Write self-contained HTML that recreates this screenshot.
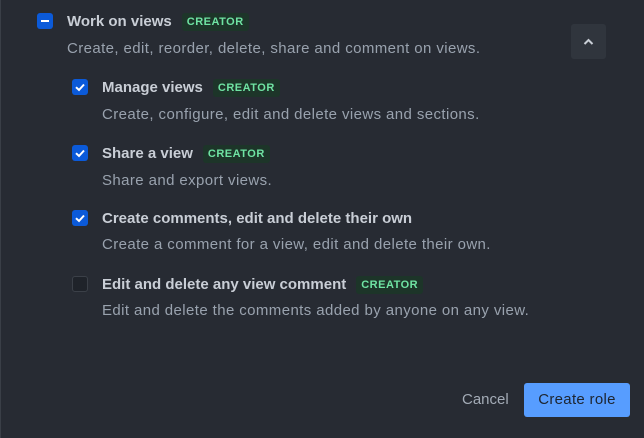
<!DOCTYPE html>
<html><head><style>
body{margin:0;width:644px;height:438px;background:#272b33;font-family:"Liberation Sans",sans-serif;position:relative;overflow:hidden}
.a{position:absolute;white-space:nowrap}
.t{font-size:15px;font-weight:bold;color:#c9ced6}
.d{font-size:15px;color:#99a2ae;letter-spacing:.4px}
.b{font-size:11px;font-weight:bold;color:#6fe3a3;background:#1d3529;padding:3px 5px;border-radius:3px;letter-spacing:.5px;margin-left:10px;vertical-align:1px}
.cb{position:absolute;width:16px;height:16px;border-radius:3px;background:#0b5ad9}
.cb.off{background:#1f232a;border:1px solid #3b4048;box-sizing:border-box}
</style></head><body>
<div class="a" style="left:0;top:0;width:1px;height:438px;background:#3a3f47"></div>
<div class="cb" style="left:37px;top:13px"><div style="position:absolute;left:4px;top:7px;width:8px;height:2px;background:#fff"></div></div>
<div class="a t" style="left:67px;top:13px">Work on views<span class="b">CREATOR</span></div>
<div class="a d" style="left:67px;top:40px">Create, edit, reorder, delete, share and comment on views.</div>
<div class="a" style="left:571px;top:24px;width:35px;height:35px;background:#30353d;border-radius:3px"><svg width="35" height="35"><path d="M13.5 20 L17.5 16 L21.5 20" stroke="#c9ced6" stroke-width="2" fill="none"/></svg></div>

<div class="cb" style="left:72px;top:79px"><svg width="16" height="16"><path d="M4 8.2 L7 11 L12 5.5" stroke="#fff" stroke-width="2" fill="none"/></svg></div>
<div class="a t" style="left:102px;top:79px">Manage views<span class="b">CREATOR</span></div>
<div class="a d" style="left:102px;top:106px">Create, configure, edit and delete views and sections.</div>

<div class="cb" style="left:72px;top:145px"><svg width="16" height="16"><path d="M4 8.2 L7 11 L12 5.5" stroke="#fff" stroke-width="2" fill="none"/></svg></div>
<div class="a t" style="left:102px;top:145px">Share a view<span class="b">CREATOR</span></div>
<div class="a d" style="left:102px;top:172px">Share and export views.</div>

<div class="cb" style="left:72px;top:210px"><svg width="16" height="16"><path d="M4 8.2 L7 11 L12 5.5" stroke="#fff" stroke-width="2" fill="none"/></svg></div>
<div class="a t" style="left:102px;top:210px">Create comments, edit and delete their own</div>
<div class="a d" style="left:102px;top:236px">Create a comment for a view, edit and delete their own.</div>

<div class="cb off" style="left:72px;top:276px"></div>
<div class="a t" style="left:102px;top:276px">Edit and delete any view comment<span class="b">CREATOR</span></div>
<div class="a d" style="left:102px;top:302px">Edit and delete the comments added by anyone on any view.</div>

<div class="a" style="left:462px;top:391px;font-size:15px;color:#a3abb6">Cancel</div>
<div class="a" style="left:524px;top:383px;width:106px;height:34px;background:#579dff;border-radius:3px;color:#1d2530;font-size:15px;letter-spacing:.3px;text-align:center;line-height:34px">Create role</div>
</body></html>
